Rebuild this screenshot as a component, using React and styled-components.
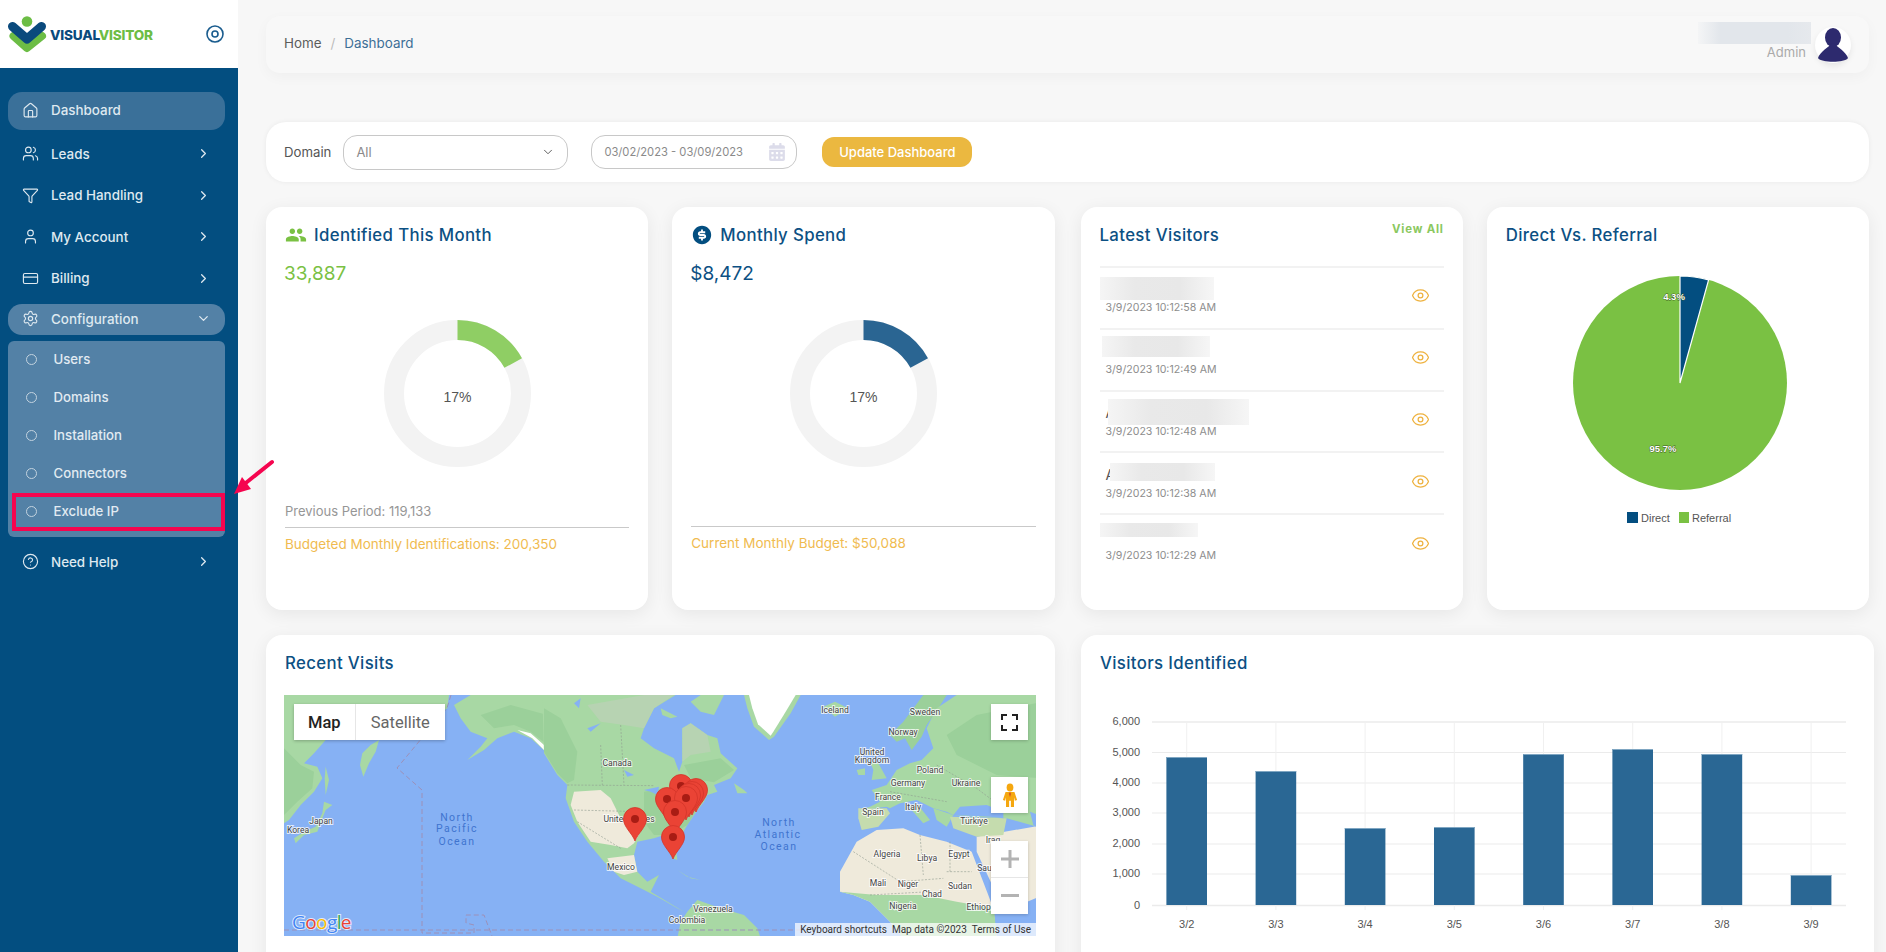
import React from "react";
import styled, { createGlobalStyle } from "styled-components";
import {
  House,
  Users,
  Funnel,
  User,
  CreditCard,
  Settings,
  CircleHelp,
  ChevronRight,
  ChevronDown,
  Eye,
} from "lucide-react";
import { MdPeople } from "react-icons/md";
import { RiMoneyDollarCircleFill } from "react-icons/ri";
import { FaCalendarAlt } from "react-icons/fa";

const BLUE = "#034e80";
const GREEN = "#7ac143";
const AMBER = "#f0bb50";

const GlobalStyle = createGlobalStyle`
  html, body {
    margin: 0;
    height: 100%;
    overflow: hidden;
  }
  body {
    font-family: Inter, "Noto Sans", sans-serif;
    background: #f7f7f7;
    color: #555;
  }
`;

const Page = styled.div`
  position: relative;
  display: flex;
  height: 952px;
  overflow: hidden;
`;

// sidebar
const Sidebar = styled.aside`
  width: 238px;
  flex: none;
  background: ${BLUE};
`;

const Brand = styled.div`
  display: flex;
  align-items: center;
  justify-content: space-between;
  height: 68px;
  padding: 0 14px 0 8px;
  box-sizing: border-box;
  background: #fff;
`;

const BrandLogo = styled.div`
  display: flex;
  align-items: center;
`;

const BrandName = styled.div`
  margin: 2px 0 0 2px;
  font-size: 13.6px;
  font-weight: 800;
  letter-spacing: -0.2px;
  color: #0a4a7d;
  span {
    color: #6cbd45;
  }
`;

const Nav = styled.nav`
  margin: 24px 13px 0 8px;
`;

const NavItem = styled.div`
  display: flex;
  align-items: center;
  height: ${(p) => p.$h || 41.5}px;
  box-sizing: border-box;
  padding: 0 14px 2px;
  border-radius: 14px;
  color: #dfe9f0;
  font-size: 13.4px;
  font-weight: 500;
  margin-bottom: ${(p) => p.$mb || 0}px;
  background: ${(p) => p.$bg || "transparent"};
  svg:first-child {
    margin-right: 12px;
    flex: none;
  }
  svg:last-child:not(:first-child) {
    margin-left: auto;
  }
`;

const SubPanel = styled.div`
  margin: 6px 0 5px;
  height: 196px;
  border-radius: 6px;
  background: #5381a6;
`;

const SubItem = styled.div`
  display: flex;
  align-items: center;
  height: 38px;
  box-sizing: border-box;
  margin-left: 4px;
  padding: 0 0 2px 14px;
  color: #e2ebf2;
  font-size: 13.2px;
  font-weight: 500;
  box-shadow: ${(p) => (p.$marked ? "inset 0 0 0 4px #f5054f" : "none")};
`;

const Bullet = styled.i`
  width: 9px;
  height: 9px;
  margin-right: 16.5px;
  border: 1px solid #c3d3df;
  border-radius: 50%;
`;

const PointerArrow = styled.svg`
  position: absolute;
  left: 230px;
  top: 455px;
`;

// main column
const Main = styled.main`
  flex: 1;
  min-width: 0;
  padding: 16px 17px 0 28px;
`;

const TopBar = styled.header`
  display: flex;
  align-items: center;
  justify-content: space-between;
  height: 57px;
  margin-bottom: 49px;
  padding: 0 18px;
  background: #f8f8f8;
  border-radius: 14px;
  box-shadow: 0 4px 14px rgba(0, 0, 0, 0.035);
`;

const Crumbs = styled.div`
  display: flex;
  gap: 9px;
  margin-top: -3px;
  font-size: 13.4px;
  color: #5c5c5c;
  em {
    font-style: normal;
    color: #bbb;
  }
  b {
    font-weight: 400;
    color: #3d6f96;
  }
`;

const UserBox = styled.div`
  display: flex;
  align-items: center;
  gap: 4px;
`;

const UserText = styled.div`
  width: 113px;
  margin-top: -7px;
  text-align: right;
  font-size: 13px;
  line-height: 16px;
  color: #aaa;
  span {
    display: block;
    margin-right: 5px;
  }
`;

const UserBlur = styled.div`
  height: 22px;
  background: linear-gradient(90deg, #f4f5f6, #e2e6eb 20%, #e2e6eb 80%, #e6e9ed);
`;

const Avatar = styled.div`
  width: 36px;
  height: 36px;
  border-radius: 50%;
  background: #fff;
  box-shadow: 0 3px 6px rgba(0, 0, 0, 0.08);
`;

const FilterBar = styled.section`
  display: flex;
  align-items: center;
  height: 60px;
  margin-bottom: 25px;
  padding-left: 18px;
  background: #fff;
  border-radius: 20px;
  box-shadow: 0 0 5px rgba(0, 0, 0, 0.06);
  font-size: 13.2px;
`;

const Field = styled.div`
  display: flex;
  align-items: center;
  justify-content: space-between;
  box-sizing: border-box;
  width: ${(p) => p.$w}px;
  height: ${(p) => p.$h}px;
  margin-left: ${(p) => p.$ml}px;
  padding: 0 ${(p) => p.$pr}px 0 12px;
  border: 1px solid #c8c8c8;
  border-radius: 14px;
  color: #8a8a8a;
  font-size: ${(p) => p.$fs}px;
`;

const UpdateButton = styled.button`
  width: 150px;
  height: 30px;
  margin-left: 25px;
  padding: 0;
  border: 0;
  border-radius: 12px;
  background: #ebb840;
  color: #fff;
  font: 500 13px Inter, sans-serif;
`;

const Split = styled.div`
  display: grid;
  grid-template-columns: 1fr 1fr;
  column-gap: 26px;
  margin-bottom: 25px;
`;

const Pair = styled.div`
  display: grid;
  grid-template-columns: 1fr 1fr;
  column-gap: 24px;
`;

const Card = styled.section`
  box-sizing: border-box;
  height: ${(p) => p.$h}px;
  padding: 17px 19px 0;
  background: #fff;
  border-radius: 16px;
  box-shadow: 0 4px 18px rgba(0, 0, 0, 0.07);
`;

const CardTitle = styled.h2`
  display: flex;
  align-items: center;
  gap: 7px;
  height: 22px;
  margin: 0;
  font-size: 16.8px;
  font-weight: 500;
  letter-spacing: 0.36px;
  color: #0c5083;
`;

const StatValue = styled.div`
  height: 28px;
  margin: 14px 0 0 -1px;
  line-height: 28px;
  font-size: 19px;
  font-weight: 400;
  color: ${(p) => p.$color};
`;

const DonutWrap = styled.svg`
  display: block;
  margin: 32px auto 0;
`;

const StatFoot = styled.div`
  margin-top: ${(p) => p.$mt}px;
  font-size: 13px;
`;

const PrevLine = styled.div`
  height: 20px;
  line-height: 20px;
  color: #969696;
`;

const BudgetLine = styled.div`
  margin-top: 6px;
  padding-top: 8px;
  border-top: 1px solid #c9c9c9;
  font-size: 13.5px;
  line-height: 17px;
  color: ${AMBER};
`;

// latest visitors
const VisitorsHead = styled.div`
  display: flex;
  align-items: flex-start;
  justify-content: space-between;
  height: 42px;
`;

const ViewAll = styled.a`
  margin-top: -2px;
  font-size: 11.4px;
  font-weight: 700;
  letter-spacing: 0.8px;
  color: #8bc85f;
`;

const VisitorRow = styled.div`
  position: relative;
  display: flex;
  align-items: center;
  justify-content: space-between;
  box-sizing: border-box;
  height: 61.8px;
  padding: 0 14px 0 6px;
  border-top: 2px solid #f2f2f2;
  > svg {
    margin-top: -4px;
  }
`;

const VisitorName = styled.div`
  height: 21px;
  line-height: 21px;
  font-size: 14px;
  color: #555;
`;

const VisitorTime = styled.div`
  font-size: 10.6px;
  line-height: 18px;
  color: #8d8d8d;
`;

const Redaction = styled.div`
  position: absolute;
  left: ${(p) => p.$x}px;
  top: ${(p) => p.$y}px;
  width: ${(p) => p.$w}px;
  height: ${(p) => p.$h}px;
  background: linear-gradient(90deg, #f5f5f5, #e9e9e9 30%, #e8e8e8 70%, #f6f6f6);
`;

const ChartSvg = styled.svg`
  display: block;
  margin-top: ${(p) => p.$mt}px;
`;

// map
const MapBox = styled.div`
  position: relative;
  width: 752px;
  height: 241px;
  margin: 21px 0 0 -1px;
  overflow: hidden;
  background: #86b1f4;
`;

const MapSwitch = styled.div`
  position: absolute;
  left: 10px;
  top: 9px;
  display: flex;
  width: 151px;
  height: 36px;
  background: #fff;
  box-shadow: 0 1px 3px rgba(0, 0, 0, 0.25);
  font: 16.5px Roboto, sans-serif;
`;

const MapTab = styled.div`
  display: flex;
  align-items: center;
  justify-content: center;
  width: ${(p) => p.$w}px;
  color: ${(p) => (p.$active ? "#222" : "#666")};
  font-weight: ${(p) => (p.$active ? 500 : 400)};
  border-right: ${(p) => (p.$active ? "1px solid #e6e6e6" : "none")};
`;

const MapButton = styled.div`
  position: absolute;
  left: 707px;
  top: ${(p) => p.$top}px;
  display: flex;
  flex-direction: ${(p) => (p.$stack ? "column" : "row")};
  align-items: center;
  justify-content: center;
  width: 37px;
  height: ${(p) => p.$h || 36}px;
  background: #fff;
  box-shadow: 0 1px 3px rgba(0, 0, 0, 0.2);
`;

const ZoomPart = styled.div`
  display: flex;
  align-items: center;
  justify-content: center;
  width: 100%;
  height: 36px;
  border-top: ${(p) => (p.$line ? "1px solid #e6e6e6" : "none")};
`;

const GoogleMark = styled.div`
  position: absolute;
  left: 8px;
  bottom: 3px;
  font: 500 19px/22px "Open Sans", sans-serif;
  letter-spacing: -0.6px;
  -webkit-text-stroke: 2px rgba(255, 255, 255, 0.75);
  paint-order: stroke fill;
`;

const GoogleLetter = styled.span`
  color: ${(p) => p.$c};
`;

const MapFoot = styled.div`
  position: absolute;
  right: 0;
  bottom: 0;
  display: flex;
  gap: 5px;
  height: 13px;
  padding: 0 5px;
  background: rgba(255, 255, 255, 0.72);
  font: 10px/13px Roboto, sans-serif;
  color: #333;
  white-space: nowrap;
`;

const LandGroup = styled.g`
  filter: blur(0.6px);
`;

const toPts = (ox, s) =>
  s
    .trim()
    .split(/\s+/)
    .map((p) => {
      const [x, y] = p.split(",").map(Number);
      return `${ox + x / 3},${y / 3}`;
    })
    .join(" ");

const L = 0;
const M = 260;
const R = 506;
const LAND = "#a8d8a4";
const DEEP = "#9bd09a";
const PALE = "#b7d3b2";
const TAN = "#efeadb";

const land = [
  [L, LAND, "0,0 495,0 490,40 400,100 210,135 125,135 90,175 60,205 100,215 115,250 90,290 50,330 15,375 0,385"],
  [L, DEEP, "0,160 50,210 90,230 85,280 40,320 0,360"],
  [L, LAND, "285,135 260,150 235,175 228,210 238,245 255,205 275,170"],
  [L, LAND, "125,215 135,255 125,300 122,250"],
  [L, LAND, "120,320 145,330 125,345 115,370 100,410 60,420 35,445 30,430 60,410 95,395 115,355"],
  [L, LAND, "510,30 560,0 790,0 790,175 740,130 690,110 640,130 600,165 550,195 590,155 610,130 560,110 530,70"],
  [L, DEEP, "590,60 680,30 790,60 790,150 740,110 690,90 630,100"],
  [L, "#fff", "700,105 740,115 780,150 780,165 745,130"],
  [M, LAND, "-5,0 395,0 330,40 300,100 290,130 330,160 390,190 405,230 415,200 415,100 440,85 490,120 520,130 530,175 580,220 560,250 510,270 520,290 490,300 480,320 450,360 430,390 395,450 400,495 385,490 360,420 330,430 280,440 270,480 280,530 310,560 345,540 320,590 370,620 420,650 400,640 340,605 290,580 230,550 180,500 130,440 90,380 65,310 70,270 40,240 0,175"],
  [M, PALE, "130,30 300,0 390,0 330,40 300,100 240,90 170,80"],
  [M, DEEP, "0,40 50,70 100,170 90,255 70,265 40,235 0,170"],
  [M, DEEP, "300,290 360,280 480,310 430,390 380,420 330,420 300,380"],
  [M, TAN, "90,290 170,285 200,310 230,370 290,410 270,445 250,460 200,450 140,440 100,380 80,330"],
  [M, TAN, "190,490 270,480 280,530 240,540 210,530"],
  [M, PALE, "415,100 440,85 490,120 500,170 440,180 415,200"],
  [M, DEEP, "420,210 530,190 570,225 510,262 440,250"],
  [M, LAND, "470,0 540,0 510,60 470,50 440,20"],
  [M, LAND, "350,40 400,65 380,70 355,60"],
  [M, LAND, "570,265 600,285 610,295 580,295"],
  [M, LAND, "600,0 770,0 740,55 690,125 675,135 630,95 610,40"],
  [M, "#fff", "615,0 755,0 725,50 688,110 680,122 642,88 625,40"],
  [M, LAND, "400,525 440,550 470,555 430,545"],
  [M, LAND, "430,650 460,615 530,640 600,660 640,700 650,730 400,730 410,680"],
  [R, LAND, "100,35 135,20 175,40 135,65"],
  [R, DEEP, "300,120 340,80 400,0 470,0 445,40 410,90 395,125 365,165 345,130 320,140"],
  [R, LAND, "500,0 760,0 760,400 650,370 560,365 490,360 470,350 430,340 380,315 330,325 300,340 290,335 210,345 240,335 270,320 245,285 290,270 320,225 360,205 395,195 430,160 410,100 440,40"],
  [R, DEEP, "560,60 760,20 760,250 620,240 500,180 470,120"],
  [R, LAND, "240,200 265,205 290,250 245,255 250,225"],
  [R, LAND, "200,225 225,220 225,240 205,240"],
  [R, "#c5dcae", "205,340 290,340 300,355 265,395 215,405 205,370"],
  [R, LAND, "380,325 420,375 400,385 360,340"],
  [R, LAND, "430,340 490,360 470,395 440,375"],
  [R, TAN, "560,425 760,390 760,600 640,650 630,620 560,470"],
  [R, "#c5dcae", "480,365 650,370 640,420 560,425 490,400"],
  [R, TAN, "150,530 200,440 260,405 340,400 390,420 470,440 545,470 610,640 620,730 340,730 300,680 240,620 190,600 150,590"],
  [R, LAND, "150,590 260,600 400,600 500,620 612,640 620,730 340,730 300,680 240,620 190,600"],
];

const water = [
  [M, "130,100 170,85 140,110"],
  [M, "90,25 110,10 105,40"],
  [M, "240,225 270,240 250,245"],
  [M, "300,285 345,275 340,300 320,290"],
  [R, "490,360 510,335 590,330 640,350 640,370 600,365 540,362"],
  [R, "720,350 745,360 745,400 730,390"],
];

// country borders, in zoomed coordinates
const borders = [
  [M, "70,270 330,272"],
  [M, "100,380 230,460"],
  [M, "170,150 175,270"],
  [M, "230,90 240,270"],
  [M, "90,345 290,350"],
  [R, "190,470 330,560 460,550"],
  [R, "390,420 400,540"],
  [R, "470,530 545,530"],
  [R, "480,440 480,530"],
  [R, "240,600 420,590"],
  [R, "440,210 560,280 640,340"],
  [R, "300,290 470,320"],
];

const mapLabels = [
  ["Korea", 14, 135],
  ["Japan", 37, 126],
  ["Canada", 333, 68],
  ["United States", 345, 124],
  ["Mexico", 337, 172],
  ["Venezuela", 429, 214],
  ["Colombia", 403, 225],
  ["Iceland", 551, 15],
  ["Sweden", 641, 17],
  ["Norway", 619, 37],
  ["United", 588, 57],
  ["Kingdom", 588, 65],
  ["Poland", 646, 75],
  ["Germany", 624, 88],
  ["Ukraine", 682, 88],
  ["France", 604, 102],
  ["Italy", 629, 112],
  ["Spain", 589, 117],
  ["Türkiye", 690, 126],
  ["Iraq", 709, 145],
  ["Algeria", 603, 159],
  ["Libya", 643, 163],
  ["Egypt", 675, 159],
  ["Saudi", 704, 173],
  ["Mali", 594, 188],
  ["Niger", 624, 189],
  ["Sudan", 676, 191],
  ["Chad", 648, 199],
  ["Nigeria", 619, 211],
  ["Ethiopia", 698, 212],
];

const oceanLabels = [
  ["North", 173, 123],
  ["Pacific", 173, 134],
  ["Ocean", 173, 147],
  ["North", 495, 128],
  ["Atlantic", 494, 140],
  ["Ocean", 495, 152],
];

const pins = [
  [397, 91],
  [412, 95],
  [408, 98],
  [405, 100],
  [383, 104],
  [402, 103],
  [391, 117],
  [351, 124],
  [389, 142],
];

const WorldMap = () => (
  <svg width="752" height="241" viewBox="0 0 752 241" style={{ display: "block" }}>
    <LandGroup>
      {land.map(([ox, fill, s], i) => (
        <polygon key={i} points={toPts(ox, s)} fill={fill} />
      ))}
      {water.map(([ox, s], i) => (
        <polygon key={i} points={toPts(ox, s)} fill="#86b1f4" />
      ))}
    </LandGroup>
    {borders.map(([ox, s], i) => (
      <polyline key={i} points={toPts(ox, s)} fill="none" stroke="#8f9a8f" strokeWidth="0.6" strokeDasharray="2 1.5" />
    ))}
    <polyline
      points="167,0 163,13 113,73 138,95 138,238 190,238 190,230 182,228 182,220 200,220 208,241"
      fill="none"
      stroke="#9c90b8"
      strokeWidth="1"
      strokeDasharray="5 3"
    />
    <line x1="0" y1="235" x2="520" y2="235" stroke="#9c90b8" strokeWidth="1" strokeDasharray="5 3" />
    {oceanLabels.map(([t, x, y], i) => (
      <text key={i} x={x} y={y + 3} textAnchor="middle" fontFamily="Roboto" fontSize="10.5" letterSpacing="1.4" fill="#3f74cf">
        {t}
      </text>
    ))}
    {mapLabels.map(([t, x, y]) => (
      <text
        key={t + x}
        x={x}
        y={y + 3}
        textAnchor="middle"
        fontFamily="Roboto"
        fontSize="8.6"
        fill="#444"
        stroke="#fff"
        strokeWidth="2"
        strokeOpacity="0.75"
        paintOrder="stroke"
      >
        {t}
      </text>
    ))}
    {pins.map(([x, y]) => (
      <g key={x + "-" + y} transform={`translate(${x} ${y})`}>
        <path
          d="M0 22 C-3 14 -11.5 8 -11.5 0 A11.5 11.5 0 1 1 11.5 0 C11.5 8 3 14 0 22 Z"
          fill="#ea4335"
          stroke="#d3352a"
          strokeWidth="0.8"
        />
        <circle r="4" fill="#a81c14" />
      </g>
    ))}
  </svg>
);

const Donut = ({ color }) => {
  const r = 63.5;
  const c = 2 * Math.PI * r;
  return (
    <DonutWrap width="147" height="147" viewBox="0 0 147 147">
      <circle cx="73.5" cy="73.5" r={r} fill="none" stroke="#f3f3f3" strokeWidth="20" />
      <circle
        cx="73.5"
        cy="73.5"
        r={r}
        fill="none"
        stroke={color}
        strokeWidth="20"
        strokeDasharray={`${c * 0.17} ${c}`}
        transform="rotate(-90 73.5 73.5)"
      />
      <text x="73.5" y="82" textAnchor="middle" fontFamily="Liberation Sans" fontSize="14" fill="#555">
        17%
      </text>
    </DonutWrap>
  );
};

const PieChart = () => (
  <ChartSvg $mt={24} width="344" height="270" viewBox="0 0 344 270">
    <circle cx="174" cy="113" r="107" fill={GREEN} />
    <path d="M174 113 L174 6 A107 107 0 0 1 202.6 9.9 Z" fill={BLUE} stroke="#fff" strokeWidth="1.2" />
    <g fontFamily="Liberation Sans" fontSize="9.5" fontWeight="700" fill="#fff" stroke="#3c5a20" strokeWidth="0.8" paintOrder="stroke" textAnchor="middle">
      <text x="168" y="30">4.3%</text>
      <text x="157" y="182">95.7%</text>
    </g>
    <rect x="121" y="242" width="11" height="11" fill={BLUE} />
    <text x="135" y="252" fontFamily="Liberation Sans" fontSize="11" fill="#555">Direct</text>
    <rect x="173" y="242" width="10" height="11" fill={GREEN} />
    <text x="186" y="252" fontFamily="Liberation Sans" fontSize="11" fill="#555">Referral</text>
  </ChartSvg>
);

const barTops = [757, 771, 828, 827, 754, 749, 754, 875];
const barDays = ["3/2", "3/3", "3/4", "3/5", "3/6", "3/7", "3/8", "3/9"];
const gridRows = [
  ["6,000", 722],
  ["5,000", 752.5],
  ["4,000", 783],
  ["3,000", 813],
  ["2,000", 844],
  ["1,000", 874],
  ["0", 905.5],
];

// viewBox keeps page coordinates: x 1100, y 700
const BarChart = () => (
  <ChartSvg $mt={26} width="755" height="240" viewBox="1100 700 755 240">
    {gridRows.map(([label, y]) => (
      <g key={label}>
        <line x1="1152" x2="1846" y1={y} y2={y} stroke="#ebebeb" strokeWidth={label === "0" || label === "6,000" ? 1.6 : 1.2} />
        <text x="1140" y={y + 3} textAnchor="end" fontFamily="Liberation Sans" fontSize="11" fill="#555">
          {label}
        </text>
      </g>
    ))}
    {barDays.map((day, i) => {
      const cx = 1186.7 + i * 89.2;
      return (
        <g key={day}>
          <line x1={cx} x2={cx} y1="722" y2="910" stroke="#f0f0f0" />
          <rect x={cx - 20.3} y={barTops[i]} width="40.6" height={905 - barTops[i]} fill="#2a6794" />
          <rect x={cx - 20.3} y={barTops[i]} width="40.6" height="1" fill="#7fa6c2" />
          <text x={cx} y="928" textAnchor="middle" fontFamily="Liberation Sans" fontSize="11" fill="#555">
            {day}
          </text>
        </g>
      );
    })}
  </ChartSvg>
);

const visitors = [
  { time: "3/9/2023 10:12:58 AM", x: 0, y: 9, w: 114, h: 23 },
  { time: "3/9/2023 10:12:49 AM", x: 2, y: 6, w: 108, h: 21 },
  { time: "3/9/2023 10:12:48 AM", x: 8, y: 7, w: 141, h: 26, name: "A" },
  { time: "3/9/2023 10:12:38 AM", x: 10, y: 10, w: 105, h: 18, name: "A" },
  { time: "3/9/2023 10:12:29 AM", x: 0, y: 8, w: 98, h: 14 },
];

const googleLetters = [
  ["G", "#4285f4"],
  ["o", "#ea4335"],
  ["o", "#fbbc05"],
  ["g", "#4285f4"],
  ["l", "#34a853"],
  ["e", "#ea4335"],
];

const navIcon = { size: 17, strokeWidth: 1.6 };
const chevron = { size: 15, strokeWidth: 2 };

const App = () => (
  <Page>
    <GlobalStyle />
    <Sidebar>
      <Brand>
        <BrandLogo>
          <svg width="40" height="40" viewBox="8 11 40 40">
            <path d="M13.5 33 L27 45 L42 33" fill="none" stroke="#6cbd45" strokeWidth="8" strokeLinecap="round" strokeLinejoin="round" />
            <circle cx="27" cy="18.5" r="5.3" fill="#6cbd45" />
            <path d="M12.5 23.5 L27 36 L41.5 23.5" fill="none" stroke="#0a4a7d" strokeWidth="9" strokeLinecap="round" strokeLinejoin="round" />
          </svg>
          <BrandName>
            VISUAL<span>VISITOR</span>
          </BrandName>
        </BrandLogo>
        <svg width="18" height="18" viewBox="0 0 18 18">
          <circle cx="9" cy="9" r="8" fill="none" stroke="#1a5c8e" strokeWidth="1.6" />
          <circle cx="9" cy="9" r="3" fill="none" stroke="#1a5c8e" strokeWidth="1.6" />
        </svg>
      </Brand>
      <Nav>
        <NavItem $h={38} $mb={4} $bg="#3a7099">
          <House {...navIcon} />
          Dashboard
        </NavItem>
        <NavItem>
          <Users {...navIcon} />
          Leads
          <ChevronRight {...chevron} />
        </NavItem>
        <NavItem>
          <Funnel {...navIcon} />
          Lead Handling
          <ChevronRight {...chevron} />
        </NavItem>
        <NavItem>
          <User {...navIcon} />
          My Account
          <ChevronRight {...chevron} />
        </NavItem>
        <NavItem $mb={4}>
          <CreditCard {...navIcon} />
          Billing
          <ChevronRight {...chevron} />
        </NavItem>
        <NavItem $h={31} $bg="#5381a6">
          <Settings {...navIcon} />
          Configuration
          <ChevronDown {...chevron} />
        </NavItem>
        <SubPanel>
          <SubItem>
            <Bullet />
            Users
          </SubItem>
          <SubItem>
            <Bullet />
            Domains
          </SubItem>
          <SubItem>
            <Bullet />
            Installation
          </SubItem>
          <SubItem>
            <Bullet />
            Connectors
          </SubItem>
          <SubItem $marked>
            <Bullet />
            Exclude IP
          </SubItem>
        </SubPanel>
        <NavItem>
          <CircleHelp {...navIcon} />
          Need Help
          <ChevronRight {...chevron} />
        </NavItem>
      </Nav>
    </Sidebar>

    <Main>
      <TopBar>
        <Crumbs>
          Home <em>/</em> <b>Dashboard</b>
        </Crumbs>
        <UserBox>
          <UserText>
            <UserBlur />
            <span>Admin</span>
          </UserText>
          <Avatar>
            <svg width="36" height="36" viewBox="0 0 36 36">
              <ellipse cx="18" cy="10.5" rx="8" ry="9.5" fill="#2d2a6e" />
              <path d="M18 16 C13 20 5 25 3 31 C6 36 30 36 33 31 C31 25 23 20 18 16 Z" fill="#2d2a6e" />
            </svg>
          </Avatar>
        </UserBox>
      </TopBar>

      <FilterBar>
        Domain
        <Field $w={225} $h={35} $ml={12} $pr={12} $fs={13}>
          All
          <ChevronDown size={14} strokeWidth={1.6} color="#555" />
        </Field>
        <Field $w={206} $h={34} $ml={23} $pr={10} $fs={11.2}>
          03/02/2023 - 03/09/2023
          <FaCalendarAlt size={18} color="#dcdcea" />
        </Field>
        <UpdateButton>Update Dashboard</UpdateButton>
      </FilterBar>

      <Split>
        <Pair>
          <Card $h={403}>
            <CardTitle>
              <MdPeople size={22} color={GREEN} />
              Identified This Month
            </CardTitle>
            <StatValue $color={GREEN}>33,887</StatValue>
            <Donut color="#8fce64" />
            <StatFoot $mt={34}>
              <PrevLine>Previous Period: 119,133</PrevLine>
              <BudgetLine>Budgeted Monthly Identifications: 200,350</BudgetLine>
            </StatFoot>
          </Card>
          <Card $h={403}>
            <CardTitle>
              <RiMoneyDollarCircleFill size={22} color={BLUE} />
              Monthly Spend
            </CardTitle>
            <StatValue $color="#0c5083">$8,472</StatValue>
            <Donut color="#2a6592" />
            <StatFoot $mt={59}>
              <BudgetLine>Current Monthly Budget: $50,088</BudgetLine>
            </StatFoot>
          </Card>
        </Pair>
        <Pair>
          <Card $h={403}>
            <VisitorsHead>
              <CardTitle>Latest Visitors</CardTitle>
              <ViewAll>View All</ViewAll>
            </VisitorsHead>
            {visitors.map((v) => (
              <VisitorRow key={v.time}>
                <div>
                  <VisitorName>{v.name || "\u00a0"}</VisitorName>
                  <VisitorTime>{v.time}</VisitorTime>
                </div>
                <Eye size={19} strokeWidth={1.6} color="#eeb23f" />
                <Redaction $x={v.x} $y={v.y} $w={v.w} $h={v.h} />
              </VisitorRow>
            ))}
          </Card>
          <Card $h={403}>
            <CardTitle>Direct Vs. Referral</CardTitle>
            <PieChart />
          </Card>
        </Pair>
      </Split>

      <Split>
        <Card $h={400}>
          <CardTitle>Recent Visits</CardTitle>
          <MapBox>
            <WorldMap />
            <MapSwitch>
              <MapTab $active $w={61}>Map</MapTab>
              <MapTab $w={90}>Satellite</MapTab>
            </MapSwitch>
            <MapButton $top={9}>
              <svg width="17" height="17" viewBox="0 0 17 17" fill="none" stroke="#222" strokeWidth="2">
                <path d="M1 6V1h5M11 1h5v5M16 11v5h-5M6 16H1v-5" />
              </svg>
            </MapButton>
            <MapButton $top={82}>
              <svg width="16" height="27" viewBox="0 0 18 28">
                <ellipse cx="9" cy="5" rx="3.8" ry="4.6" fill="#f5a70f" />
                <path d="M4 10 H14 L17 19 L14.5 20 L13.5 16 V27 H10 V20 H8 V27 H4.5 V16 L3.5 20 L1 19 Z" fill="#f5a70f" />
                <path d="M9 10 L7.8 12 L9 16 L10.2 12 Z" fill="#d9541e" />
              </svg>
            </MapButton>
            <MapButton $top={146} $h={73} $stack>
              <ZoomPart>
                <svg width="18" height="18" viewBox="0 0 18 18">
                  <path d="M7.5 0H10.5V7.5H18V10.5H10.5V18H7.5V10.5H0V7.5H7.5Z" fill="#b3b3b3" />
                </svg>
              </ZoomPart>
              <ZoomPart $line>
                <svg width="18" height="4" viewBox="0 0 18 4">
                  <rect width="18" height="3" fill="#b3b3b3" />
                </svg>
              </ZoomPart>
            </MapButton>
            <GoogleMark>
              {googleLetters.map(([ch, c], i) => (
                <GoogleLetter key={i} $c={c}>
                  {ch}
                </GoogleLetter>
              ))}
            </GoogleMark>
            <MapFoot>
              <span>Keyboard shortcuts</span>
              <span>Map data ©2023</span>
              <span>Terms of Use</span>
            </MapFoot>
          </MapBox>
        </Card>
        <Card $h={400}>
          <CardTitle>Visitors Identified</CardTitle>
          <BarChart />
        </Card>
      </Split>
    </Main>

    <PointerArrow width="50" height="50" viewBox="0 0 50 50">
      <line x1="42" y1="7" x2="12" y2="31" stroke="#f5054f" strokeWidth="4" strokeLinecap="round" />
      <polygon points="4,39 12,22 21,34" fill="#f5054f" />
    </PointerArrow>
  </Page>
);

export default App;
